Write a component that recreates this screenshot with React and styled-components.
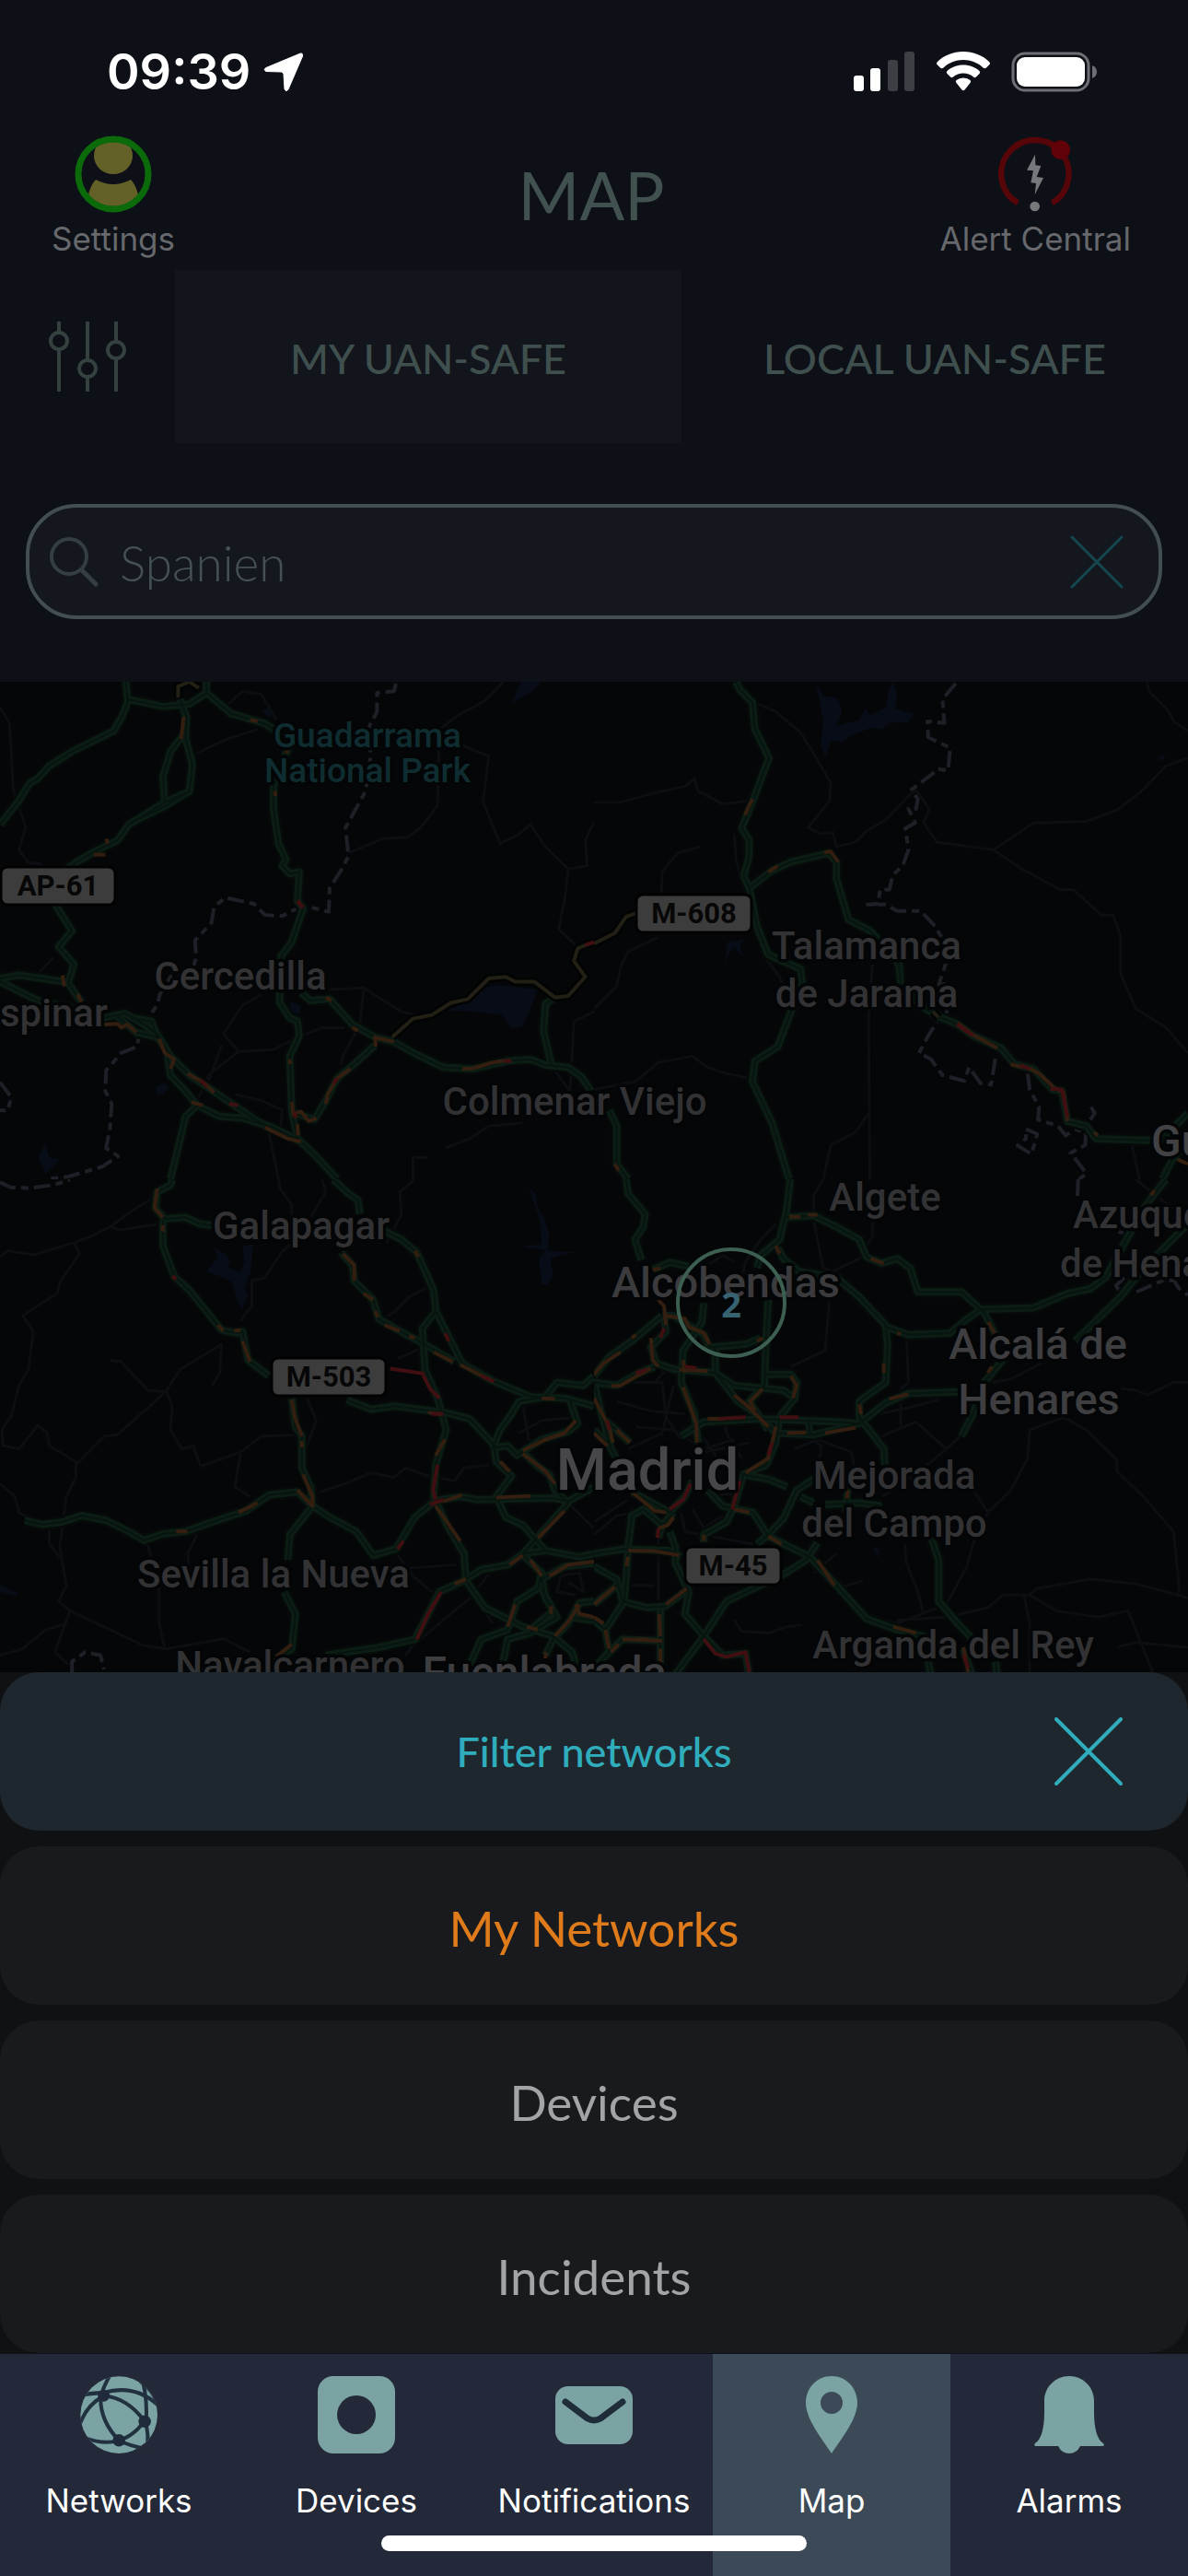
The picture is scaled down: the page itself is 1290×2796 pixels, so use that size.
import React from 'react'
import styled, { createGlobalStyle } from 'styled-components'

const GlobalStyle = createGlobalStyle`
  * { box-sizing: border-box; }
  body {
    margin: 0;
    background: #0d1017;
    font-family: Inter, "Liberation Sans", sans-serif;
  }
  button, input { font: inherit; color: inherit; }
`

/* ---------- map data ---------- */
/* every quarter of the map has its own 1568 x 1568 grid */

const northWest = {
  x: 0,
  y: 0,
  water: [
    'M1180 1035L1235 1010L1270 965L1320 955L1420 970L1400 1030L1380 1085L1350 1095L1325 1050L1250 1040Z',
    'M410 1280L430 1262L447 1280L430 1302L412 1298Z',
    'M120 1455L130 1500L160 1505L120 1552L100 1500Z',
    'M690 95L705 82L725 100L710 112Z',
    'M1350 68L1375 0L1430 0L1400 35Z',
    'M765 1010L795 1020L790 1050L765 1040Z',
  ],
  minor: [
    'M0 80L25 130L35 340L68 460L50 530L75 570L110 575',
    'M1330 0L1280 60L1210 105L1160 150L1155 390L1110 460L1075 490L1010 495L920 540',
    'M1160 190L1220 200L1290 235L1275 380L1320 510L1370 480L1400 450L1440 520L1500 590L1550 580L1545 500L1568 440',
    'M1500 590L1490 690L1475 780L1520 830',
    'M520 225L600 180L680 150', 'M730 120L690 40L640 30L590 85',
    'M690 985L640 1020L590 1110L630 1165L720 1160L790 1120L850 1090L910 1090',
    'M630 1165L550 1240L525 1310', 'M585 1145L550 1260',
    'M870 970L960 965L1060 1040L1110 1055', 'M960 970L950 1080L905 1180L900 1210',
    'M1568 1040L1515 1070L1505 1290L1460 1220', 'M620 1300L690 1320L745 1350L740 1400L710 1420L735 1568',
    'M1175 1470L1240 1440L1290 1400L1380 1390', 'M1090 1568L1090 1500L1130 1500', 'M140 870L105 915',
  ],
  borders: [
    'M1045 5L1040 30L995 35L995 95L975 140L978 240L965 345L912 460L920 550L900 595L870 650L868 725L800 705L745 738L700 735L670 700L595 680L565 710L558 760L515 815L518 870L505 920L450 930L422 985L415 1020L370 1090L362 1150L320 1170L280 1225L278 1290L295 1330L290 1410L280 1470L312 1495L270 1528L180 1560L120 1568',
    'M0 1262L30 1310L20 1352L0 1350',
  ],
  yellow: ['M1035 1120L1090 1062L1140 1050L1190 1012L1235 1000L1290 935L1335 930L1360 945L1410 945L1465 995L1500 990L1545 930L1515 880L1525 840L1568 820', 'M470 50L470 15L500 0L525 20'],
  roads: [
    'M332 0L337 55L430 78L500 70L545 35L545 0', 'M340 55L322 110L300 155L190 220L130 265L100 305L78 320L50 375L0 450',
    'M545 35L610 100L700 132L770 190L755 225L722 330L722 400L735 510L755 560L745 580L765 605L790 600L785 690L800 715L770 820L742 865L738 1010L765 1060L785 1070L790 1115L765 1180L770 1350L785 1440',
    'M475 55L492 110L490 180L508 260L500 345L435 380L340 450L310 500L250 535L200 570L165 600L150 710L190 785L155 835L195 890L180 950L215 1010',
    'M485 165L450 220L430 300L435 380', 'M500 345L430 395L345 445',
    'M0 935L50 925L170 945', 'M0 945L100 1005L220 1040', 'M270 1060L330 1045L380 1080L415 1110L450 1180L500 1240L600 1320L680 1385L790 1445L830 1490L890 1568',
    'M310 1055L360 1105L415 1120L440 1160L450 1240L490 1290L520 1335L580 1370L640 1375L720 1405L795 1450', 'M350 1060L400 1070L415 1120',
    'M520 1335L490 1370L470 1470L450 1568',
    'M795 980L820 1005L870 1000L930 1080L990 1120L1040 1135L1100 1175L1170 1215L1250 1220L1340 1195L1400 1190L1440 1208L1500 1215L1535 1245L1560 1290',
    'M990 1145L940 1200L890 1250L860 1320L830 1380L780 1360', 'M1465 995L1440 1015L1435 1100L1455 1205',
  ],
  slow: [
    'M485 110L478 180', 'M248 545L278 545', 'M165 925L170 960', 'M205 985L215 1010', 'M275 1080L310 1078L320 1090L335 1080L360 1105',
    'M420 1125L435 1170L460 1190L450 1220', 'M495 1235L540 1265L565 1295', 'M505 1325L535 1335', 'M700 1405L760 1440L795 1450',
    'M930 1090L945 1100', 'M985 1120L1040 1135', 'M990 1125L992 1150', 'M925 1220L890 1250L865 1300L860 1330', 'M835 1375L815 1385L795 1355L775 1360', 'M785 1395L787 1430',
    'M1220 1220L1250 1218L1300 1200L1330 1195', 'M860 995L875 1005', 'M765 1190L765 1205', 'M660 120L680 125', 'M770 1325L775 1370', 'M280 495L285 510', 'M755 210L758 225', 'M725 345L728 360',
  ],
  jam: ['M785 690L800 712', 'M530 1255L545 1275', 'M605 1330L628 1335', 'M1330 1195L1350 1195', 'M880 1265L890 1250', 'M778 1355L780 1375', 'M1545 830L1568 820'],
}

const northEast = {
  x: 645,
  y: 0,
  water: [
    'M585 0L605 45L640 50L655 90L640 140L700 120L715 85L730 105L770 80L780 20L790 0L800 40L795 85L845 100L830 128L780 130L760 150L730 145L680 170L655 190L625 185L612 240L598 200L605 120Z',
    'M345 888L352 820L400 810L385 830L395 862L378 850L372 835L360 850Z', 'M1485 245L1500 230L1512 238L1495 248Z',
  ],
  minor: [
    'M425 65L480 95L545 160L585 235L625 320L622 375L565 460L600 480L630 475L640 520L690 505L720 470L770 435L830 360L850 340L885 400L870 445L905 505L1055 530L1160 445L1300 440L1380 405L1450 340L1510 265L1568 240',
    'M1460 0L1465 30L1515 90L1530 125L1568 155', 'M1055 530L1130 590L1230 655L1265 655L1340 735L1370 735L1390 800L1390 920L1430 1030L1510 1090L1568 1170',
    'M0 380L70 380L160 350L240 330L265 305L275 345L340 385L410 375', 'M280 520L220 540L180 600L178 665', 'M170 805L90 850L70 900L60 960L0 1030',
    'M370 480L375 560L395 640', 'M735 890L725 1060L728 1568', 'M0 1285L110 1260L170 1200L260 1180L300 1215L350 1235L410 1250', 'M725 1360L690 1420L625 1460L605 1568',
    'M440 850L490 930L500 960', 'M1420 1460L1440 1568',
  ],
  borders: [
    'M955 5L920 55L925 130L880 125L882 175L940 208L935 280L910 275L838 340L855 370L850 400L830 400L848 445L822 462L830 530L815 580L788 610L780 655L755 655L750 700L722 702L770 702L800 722L862 722L900 770L925 820L928 890L910 955L940 950L930 1045L910 1065L885 1110L858 1170L890 1190L920 1240L978 1258L990 1215L1020 1265L1048 1270L1062 1170',
    'M1145 1235L1150 1285L1175 1340L1172 1380L1225 1400L1245 1430L1270 1410L1298 1420L1297 1460L1258 1485L1300 1550L1280 1568',
    'M1140 1410L1170 1425L1155 1488L1118 1462L1140 1440Z', 'M1310 1380L1322 1360L1312 1340',
  ],
  yellow: ['M0 825L55 792L85 740L115 728', 'M895 1040L910 1058'],
  roads: [
    'M375 0L385 25L418 65L425 150L462 240L440 310L418 380L390 460L410 500L408 560L395 610L410 650L430 770L460 860L545 905L550 950L520 1040L485 1150L425 1195L418 1260L470 1390L515 1568',
    'M410 650L470 595L520 568L620 540L640 570L640 620L672 750L730 785L805 890L810 955L860 1020L910 1055L960 1080L1000 1115L1075 1155L1110 1205L1160 1220L1210 1285L1235 1290L1250 1385L1300 1400L1325 1440L1460 1445L1500 1440L1568 1360',
    'M40 1350L60 1400L60 1520L90 1568', 'M1568 1440L1525 1510L1500 1568',
  ],
  slow: [
    'M418 370L398 420', 'M460 600L485 580', 'M608 538L625 535L645 568', 'M55 1520L65 1540', 'M960 1075L1000 1112L1065 1155', 'M1100 1205L1130 1215', 'M1145 1215L1175 1235L1215 1280L1240 1295L1250 1385', 'M1320 1420L1330 1430', 'M1540 1505L1568 1520',
  ],
  jam: ['M958 1080L1000 1115', 'M1125 1208L1150 1220', 'M1205 1283L1235 1285L1250 1370'],
}

const southWest = {
  x: 0,
  y: 540,
  water: [
    'M545 290L575 245L565 215L595 235L610 260L600 275L635 295L645 260L640 210L668 205L662 290L645 345L655 365L638 412L622 365L610 320Z',
    'M1395 20L1415 50L1420 90L1440 130L1450 180L1445 225L1515 230L1452 250L1460 300L1445 335L1430 330L1422 250L1440 225L1375 212L1430 205L1425 130Z',
    'M0 1278L48 1305L45 1315L0 1300Z',
  ],
  minor: [
    'M0 245L20 225L90 238L195 200L240 180L290 150L360 90L410 55', 'M290 150L315 160L425 140', 'M195 200L210 235L160 320L150 360L60 430L88 480L75 600L50 650L30 745L5 790L8 840L50 850L100 775L125 800L130 840L200 890L200 940L175 1000L158 1160L175 1280L155 1330L185 1360L145 1490L180 1530',
    'M200 900L275 810L310 805L410 700L440 665L475 600L585 520L580 610L560 650', 'M290 570L320 575L390 665L440 670L455 720L450 790L480 850L510 840L530 905L635 860L690 810L790 805', 'M635 865L620 970L660 1000',
    'M635 445L665 400L665 320L700 310L740 235L770 200L770 80L740 30L735 0', 'M850 0L860 40L820 120', 'M1095 0L1055 40L1060 110L1020 200', 'M1130 340L1080 370L1040 420L1010 440', 'M1125 525L1050 565', 'M810 690L835 760L810 840',
    'M845 985L920 955L980 925L1040 940L1070 910L1130 935L1200 950L1225 910L1290 900', 'M0 960L40 1000L50 1050L80 1070', 'M130 1080L130 1150L165 1200', 'M185 1360L380 1470L440 1480L590 1448L660 1490', 'M0 1500L60 1480L120 1420L175 1400',
    'M390 1150L420 1300L420 1400L435 1480', 'M520 1120L495 1180L500 1230', 'M1050 1185L1090 1250L1140 1300', 'M1080 1225L1205 1215', 'M1300 1230L1240 1320L1130 1430L1090 1470L1070 1500', 'M1500 1020L1568 1100', 'M1280 1360L1300 1400', 'M1370 800L1430 760L1520 750', 'M1380 710L1400 850', 'M1500 1270L1540 1300L1530 1240L1480 1250L1470 1300L1520 1310',
  ],
  borders: ['M0 10L30 26L80 28L140 18L185 2', 'M190 1560L190 1520L225 1490L265 1500L275 1545'],
  yellow: [],
  roads: [
    'M455 0L450 18L415 40L410 90L435 125L490 120L525 140L560 145', 'M430 130L430 210L460 305L500 350L585 475L625 485L640 480L655 570L710 620',
    'M880 0L920 45L945 65L950 110', 'M1010 160L1060 190L1100 230L1145 350L1150 415L1220 580L1300 635L1400 685L1490 690L1568 715',
    'M900 230L930 270L935 320L985 380L1000 440L1050 475L1120 520L1200 575', 'M1148 420L1115 470L1122 600L1155 690L1178 790L1150 900L1145 1000L1180 1090L1225 1180L1230 1265',
    'M770 690L780 780L797 810L797 910L820 970L825 1030L765 1120L760 1200', 'M750 1300L780 1370L770 1480L730 1510',
    'M65 1075L110 1088L165 1080L215 1060L280 1075L340 1110L380 1138L430 1118L490 1110L560 1080L650 1045L710 995L785 985L825 1030L870 1065L940 1110L985 1185L1045 1165L1095 1065L1150 1012L1215 1000L1260 1010L1460 1005L1500 1015L1568 970',
    'M915 695L980 725L1040 715L1175 735L1240 755L1310 845L1340 840L1365 870L1430 820L1500 795L1525 770L1505 700',
    'M1300 850L1320 790L1350 740L1370 700L1440 685L1470 640L1540 650L1568 620', 'M1305 850L1310 890L1350 935L1310 1000L1335 1065L1380 1090L1440 1170L1530 1190L1568 1180', 'M1380 860L1420 905L1450 930L1465 980L1500 1020L1440 1100L1380 1180L1340 1215L1270 1230L1225 1265L1160 1300L1130 1370L1095 1450L1000 1475L860 1500',
    'M1230 1265L1280 1350L1380 1410L1460 1440L1510 1490L1530 1568', 'M1380 1185L1430 1240L1420 1290L1365 1330L1340 1420L1270 1450L1240 1530', 'M1380 1180L1440 1170', 'M1568 1210L1490 1220L1430 1260L1440 1320L1470 1380L1400 1430L1340 1450L1325 1540', 'M1430 1290L1460 1360L1400 1420', 'M1568 1330L1530 1335L1500 1400L1460 1450L1440 1500', 'M1500 1380L1568 1390',
  ],
  slow: [
    'M415 30L408 90L430 120', 'M430 145L430 165', 'M575 460L590 478', 'M618 478L635 475', 'M640 510L660 575', 'M770 695L778 750L797 810', 'M797 825L797 845', 'M800 930L825 1000L825 1035', 'M785 980L825 1030', 'M630 1050L680 1020', 'M465 1110L495 1110',
    'M905 235L935 270L935 320', 'M960 360L985 380', 'M990 415L998 435', 'M1015 460L1055 478', 'M1080 495L1095 500', 'M1145 545L1195 575', 'M1215 585L1300 635', 'M1130 735L1165 740', 'M1150 870L1175 820', 'M1430 690L1465 692', 'M1520 760L1490 800L1440 820L1380 855', 'M1380 865L1440 920L1465 960', 'M1170 1015L1220 995', 'M1310 1003L1400 998', 'M1320 890L1345 920',
    'M1150 1030L1215 1140', 'M1490 1045L1420 1130', 'M1380 1185L1345 1215', 'M1400 1200L1430 1250', 'M1230 1260L1200 1275', 'M1568 1205L1500 1215L1450 1250', 'M1360 1340L1340 1410', 'M1440 1490L1440 1510', 'M1530 1340L1500 1395L1465 1440', 'M1568 1380L1530 1370L1520 1340', 'M770 1465L730 1505', 'M1390 1410L1420 1420', 'M1455 1345L1455 1370', 'M1095 225L1105 245',
  ],
  jam: ['M455 305L465 315', 'M1030 597L1115 612L1135 660L1160 690', 'M1175 485L1185 510', 'M1270 620L1305 638', 'M1155 900L1143 980L1150 1010', 'M1135 1025L1170 1010', 'M1165 1300L1130 1370L1100 1450', 'M1050 1165L1065 1140', 'M1140 740L1170 740'],
}

const southEast = {
  x: 645,
  y: 540,
  water: ['M735 1160L755 1165L748 1195Z'],
  minor: [
    'M605 0L580 50L580 130L605 280L630 290L700 250L735 180L735 120', 'M610 290L620 400L610 540L520 590', 'M480 140L440 190L400 260L390 310', 'M825 490L830 640L810 660L810 780', 'M1430 0L1568 130', 'M750 740L830 720L910 695', 'M1050 640L1100 630L1180 580', 'M1390 660L1430 665L1460 680L1530 640L1568 640',
    'M760 810L850 765L930 850L860 920L800 970L760 1000', 'M930 850L975 800', 'M990 960L1040 1050L1100 980L1145 880L1150 790L1240 750L1300 790L1380 885L1380 920L1450 1000L1530 1110L1545 1290L1540 1315', 'M1040 1050L1000 1150L985 1220L930 1340L800 1400L720 1370', 'M800 1390L930 1380L1040 1350L1080 1310L1150 1310L1170 1290L1310 1260L1430 1275L1540 1310L1568 1320',
    'M1135 1310L1150 1400L1150 1568', 'M1150 1310L1220 1360L1330 1380L1410 1360L1440 1450L1480 1568', 'M1380 1475L1430 1460L1568 1475', 'M820 1150L825 1210L855 1300L870 1370', 'M530 850L590 820L680 860L690 920', 'M590 930L600 840L550 800', 'M640 1180L580 1240', 'M710 1265L640 1290', 'M370 1390L390 1425L460 1430L510 1410L550 1405',
    'M100 640L180 640L190 750L230 820', 'M110 780L210 790L290 850L370 820', 'M160 640L190 600', 'M60 700L150 730L240 740', 'M90 850L180 800L210 650', 'M280 800L320 870L330 960', 'M290 860L410 830', 'M340 740L350 800L390 880', 'M0 1120L60 1060L110 1050', 'M170 1100L170 1400', 'M90 1280L160 1280', 'M260 1040L290 1100L340 1060', 'M230 1050L240 1110L420 1150', 'M300 270L340 240L370 260', 'M310 1000L360 990L370 1030', 'M0 1080L90 1010',
  ],
  borders: ['M1278 0L1276 60', 'M1385 165L1420 180L1420 195', 'M1400 310L1378 335L1385 350', 'M1432 355L1500 320L1530 318L1545 345L1568 365'],
  yellow: [],
  roads: [
    'M85 0L90 45L135 110L130 150L108 190L125 255', 'M155 285L200 262L250 275', 'M518 0L508 100L490 190L440 240L430 280', 'M508 120L580 115L640 150L700 190L720 245L760 265L800 250L835 280L855 355L970 355L1030 420L1060 490', 'M485 215L500 250L540 290L640 310L700 370L770 460L775 520L770 640L700 700L700 750L765 850L768 900',
    'M770 465L830 490L940 485L985 440L1020 410L1160 405L1250 360L1310 345L1350 310L1410 180L1420 160', 'M1510 0L1470 60L1430 130', 'M1568 140L1510 210L1430 310L1390 370L1270 510', 'M1085 560L1030 640L1000 740L970 810', 'M960 670L830 675L770 705L700 770L580 805L480 800',
    'M180 430L100 510L40 560L0 620', 'M180 430L210 430L290 490L305 530L400 520L440 500', 'M290 390L285 450L235 540L230 640L265 740L275 830', 'M460 380L455 480L450 650L410 700L460 790', 'M185 440L190 480L150 530L165 580L215 600L320 610L370 650L500 665L530 690L490 750L480 830L455 900L395 930L370 1030L350 1080L290 1120L290 1145',
    'M320 530L320 610L380 700L440 750L480 800', 'M450 615L520 615L535 640L530 690', 'M0 640L60 650L120 610L160 590', 'M0 640L20 740L45 850L60 880', 'M230 810L290 765L440 755L650 765L700 770', 'M0 790L45 840', 'M30 760L95 830', 'M390 930L460 945L510 970', 'M580 945L535 980L500 1070L460 1120L430 1150', 'M610 1025L700 1020L760 1030', 'M545 1000L580 1020', 'M670 970L665 1050',
    'M100 985L200 1050L240 1000L260 950', 'M300 980L340 1030L420 1050L460 1125L570 1190L640 1280L720 1385L800 1420L900 1450', 'M590 1145L560 1200L500 1245L420 1290L350 1330L290 1440L210 1568', 'M0 1180L80 1165L200 1170L230 1190', 'M90 1160L100 1060L130 1040L180 1090L170 1130', 'M200 1110L215 1160L215 1210L250 1300L240 1370L290 1440L340 1500L400 1495L410 1568', 'M0 1220L60 1260L75 1330L140 1350L190 1345L250 1290', 'M90 1165L80 1330L30 1420L40 1490L0 1540', 'M0 1340L60 1280', 'M175 1355L175 1568', 'M40 1490L75 1450L180 1455', 'M890 1130L910 1200L910 1330L960 1400L1000 1450', 'M180 1090L210 1050', 'M880 1500L890 1568', 'M1060 1520L1065 1568', 'M975 1480L1000 1568', 'M565 755L570 800', 'M0 1390L30 1420',
  ],
  slow: [
    'M515 118L545 118', 'M565 112L590 112', 'M1470 50L1480 35', 'M480 210L490 235', 'M730 250L765 265', 'M155 285L175 280', 'M170 380L185 400L190 460', 'M190 430L240 440L250 465L290 485L305 520', 'M150 500L155 570L170 590', 'M100 500L110 490', 'M70 545L25 580L0 615', 'M45 652L70 650L150 595', 'M225 600L300 605', 'M235 655L270 770L272 830', 'M370 680L410 720L460 780', 'M445 660L412 700L425 730', 'M520 620L535 650L525 690', 'M480 780L460 880L400 925', 'M300 755L340 755', 'M510 800L560 798', 'M610 800L690 783', 'M700 710L705 740', 'M780 692L830 677', 'M765 580L765 610', 'M800 485L810 488', 'M1040 450L1058 485', 'M1050 590L1040 610', 'M430 510L445 500',
    'M0 690L40 780L50 830', 'M60 790L95 830', 'M0 800L35 840', 'M100 985L140 1025L160 1045L190 1050', 'M370 1040L410 1050', 'M460 1125L495 1150', 'M590 1200L635 1280', 'M790 1410L850 1430', 'M90 1170L160 1172L225 1185', 'M90 1190L85 1220', 'M210 1065L195 1090L170 1100', 'M245 1290L190 1340', 'M55 1285L30 1310L0 1340', 'M0 1380L25 1400', 'M30 1420L40 1480', 'M75 1450L180 1455', 'M172 1370L175 1440', 'M110 1450L140 1450', 'M175 1480L175 1540', 'M45 1490L65 1465', 'M670 980L668 1005', 'M290 1120L290 1140', 'M975 1475L990 1568', 'M240 610L235 570',
  ],
  jam: ['M185 470L175 500', 'M110 610L140 600', 'M240 590L270 595', 'M330 755L400 750', 'M490 750L540 750', 'M35 760L40 790', 'M470 830L460 870', 'M385 950L365 1040', 'M255 960L235 1010L200 1040', 'M170 1100L168 1130', 'M290 1450L320 1495L350 1505L400 1490L412 1568', 'M975 1500L988 1540'],
}

const tiles = [northWest, northEast, southWest, southEast]

/* widest strokes first, so that crossings stay clean */
const layers = [
  { key: 'water', fill: '#070c16' },
  { key: 'minor', stroke: '#0d0e12', width: 3 },
  { key: 'borders', stroke: '#1f1f27', width: 4, dash: '18 6 8 6' },
  { key: 'roads', stroke: '#060b0a', width: 13 },
  { key: 'roads', stroke: '#0b1d14', width: 8 },
  { key: 'roads', stroke: '#08140f', width: 2 },
  { key: 'yellow', stroke: '#020303', width: 9 },
  { key: 'yellow', stroke: '#221f15', width: 4 },
  { key: 'slow', stroke: '#331e10', width: 4 },
  { key: 'jam', stroke: '#410f11', width: 4 },
]

const places = [
  { text: 'Guadarrama', x: 399, y: 71, size: 37, color: '#0f2d30' },
  { text: 'National Park', x: 399, y: 109, size: 37, color: '#0f2d30' },
  { text: 'Cercedilla', x: 261, y: 334, size: 42 },
  { text: 'spinar', x: 0, y: 374, size: 42, anchor: 'start' },
  { text: 'Colmenar Viejo', x: 624, y: 470, size: 42 },
  { text: 'Talamanca', x: 941, y: 301, size: 42 },
  { text: 'de Jarama', x: 941, y: 353, size: 42 },
  { text: 'Guadalajara', x: 1250, y: 515, size: 48, color: '#414143', anchor: 'start' },
  { text: 'Galapagar', x: 327, y: 605, size: 42 },
  { text: 'Algete', x: 961, y: 574, size: 42 },
  { text: 'Azuqueca', x: 1165, y: 593, size: 42, anchor: 'start' },
  { text: 'de Henares', x: 1151, y: 646, size: 42, anchor: 'start' },
  { text: 'Alcobendas', x: 788, y: 668, size: 47, color: '#3b3b3d' },
  { text: 'Alcalá de', x: 1127, y: 735, size: 47, color: '#3e3e40' },
  { text: 'Henares', x: 1128, y: 795, size: 47, color: '#3e3e40' },
  { text: 'Madrid', x: 703, y: 877, size: 63, color: '#474749' },
  { text: 'Mejorada', x: 971, y: 876, size: 42 },
  { text: 'del Campo', x: 971, y: 928, size: 42 },
  { text: 'Sevilla la Nueva', x: 297, y: 983, size: 42 },
  { text: 'Arganda del Rey', x: 1035, y: 1060, size: 42 },
  { text: 'Navalcarnero', x: 315, y: 1082, size: 42 },
  { text: 'Fuenlabrada', x: 591, y: 1092, size: 48, color: '#3e3e40' },
]

const shields = [
  { text: 'AP-61', x: 1, y: 201, w: 124 },
  { text: 'M-608', x: 691, y: 231, w: 125 },
  { text: 'M-503', x: 295, y: 734, w: 124 },
  { text: 'M-45', x: 744, y: 939, w: 104 },
]

/* ---------- styled parts ---------- */

const Screen = styled.div`
  min-height: 100vh;
  display: flex;
  flex-direction: column;
  background: #0d1017;
`

const StatusBar = styled.div`
  height: 147px;
  padding: 8px 98px 0 116px;
  display: flex;
  align-items: center;
  justify-content: space-between;
  color: #fff;
`

const StatusGroup = styled.div`
  display: flex;
  align-items: center;
  gap: ${props => props.$gap}px;
`

const Clock = styled.time`
  font-size: 54px;
  font-weight: 600;
  line-height: 64px;
`

const Header = styled.header`
  display: grid;
  grid-template-columns: 1fr auto 1fr;
  align-items: center;
  padding: 0 62px 14px 56px;
`

const HeaderButton = styled.button`
  justify-self: ${props => props.$side};
  display: flex;
  flex-direction: column;
  align-items: center;
  gap: 8px;
  padding: 0;
  border: 0;
  background: none;
  color: #66686c;
  font-size: 35px;
  line-height: 40px;
`

const Title = styled.h1`
  margin: 0;
  padding-bottom: 4px;
  color: #41514f;
  font-family: Lato, sans-serif;
  font-size: 72px;
  font-weight: 400;
  line-height: 80px;
`

const Tabs = styled.div`
  display: flex;
  height: 188px;
`

const FilterButton = styled.button`
  width: 190px;
  display: flex;
  align-items: center;
  justify-content: center;
  padding: 0;
  border: 0;
  background: none;
`

const Tab = styled.button`
  flex: 1;
  padding: 4px 0 0;
  border: 0;
  background: ${props => (props.$active ? '#12151c' : 'none')};
  color: #3f4f4d;
  font-family: Lato, sans-serif;
  font-size: 45px;
  font-weight: 500;
`

const SearchBox = styled.label`
  display: flex;
  align-items: center;
  height: 125px;
  margin: 66px 28px 68px;
  padding: 0 38px 0 22px;
  border: 4px solid #434e53;
  border-radius: 55px;
  background: #14171e;
`

const SearchInput = styled.input`
  flex: 1;
  min-width: 0;
  margin-left: 22px;
  padding: 2px 0 0;
  border: 0;
  outline: 0;
  background: none;
  color: #465154;
  font-family: Lato, sans-serif;
  font-size: 53px;
  font-weight: 300;
`

const IconButton = styled.button`
  display: flex;
  padding: 0;
  border: 0;
  background: none;
  color: ${props => props.$color};
`

const MapArea = styled.main`
  position: relative;
  flex: 1;
  min-height: 400px;
  overflow: hidden;
  background: #050608;
`

const MapCanvas = styled.svg`
  position: absolute;
  inset: 0;
  width: 100%;
  height: 100%;
`

const Sheet = styled.section`
  display: flex;
  flex-direction: column;
  gap: 17px;
  padding-bottom: 1px;
  background: #101113;
`

const SheetHeader = styled.div`
  display: grid;
  grid-template-columns: 1fr auto 1fr;
  align-items: center;
  height: 172px;
  padding: 0 71px;
  border-radius: 42px;
  background: #1e272e;
`

const SheetTitle = styled.h2`
  grid-column: 2;
  margin: 0;
  color: #30adbc;
  font-family: Lato, sans-serif;
  font-size: 45px;
  font-weight: 500;
`

const CloseCell = styled.div`
  justify-self: end;
`

const SheetOption = styled.button`
  height: 172px;
  padding: 4px 0 0;
  border: 0;
  border-radius: 42px;
  background: #191a1d;
  color: ${props => (props.$active ? '#df7b1a' : '#a3a4a6')};
  font-family: Lato, sans-serif;
  font-size: 53px;
`

const TabBar = styled.nav`
  position: relative;
  display: flex;
  height: 241px;
  background: #232938;
`

const TabLink = styled.a`
  flex: 1 1 0;
  min-width: 0;
  display: flex;
  flex-direction: column;
  align-items: center;
  gap: 31px;
  padding-top: 24px;
  background: ${props => (props.$active ? '#3b4a56' : 'none')};
  color: #fff;
  font-size: 35px;
  line-height: 40px;
  text-decoration: none;
`

const HomeIndicator = styled.div`
  position: absolute;
  left: 50%;
  bottom: 27px;
  width: 462px;
  height: 17px;
  margin-left: -231px;
  border-radius: 9px;
  background: #fff;
`

/* ---------- icons ---------- */

const LocationArrow = () => (
  <svg width="44" height="44" viewBox="0 0 44 44">
    <path d="M39 2.500Q43 .500 42.500 5L27 41Q24.500 44.500 23 40.500L22 24.500Q21.500 22.500 19.500 22L3 21.500Q-.500 19.500 3 17.500Z" fill="#fff" stroke="#fff" strokeWidth="1" />
  </svg>
)

const Signal = () => (
  <svg width="67" height="43" viewBox="0 0 67 43" fill="#fff">
    <rect x="0" y="26" width="11" height="17" rx="3" />
    <rect x="18" y="18" width="11" height="25" rx="3" />
    <rect x="37" y="9" width="11" height="34" rx="3" fill="#3d3f45" />
    <rect x="55" y="0" width="11" height="43" rx="3" fill="#3d3f45" />
  </svg>
)

const Wifi = () => (
  <svg width="58" height="43" viewBox="0 0 58 43" fill="#fff">
    <path d="M29 0C18 0 8 4 1 11Q-1 13 1 14.500L4 17.500Q5.500 19 7.500 17.500C13 12 21 9 29 9S45 12 50.500 17.500Q52.500 19 54 17.500L57 14.500Q59 13 57 11C50 4 40 0 29 0Z" />
    <path d="M29 14.500C22 14.500 16 17 11.500 21Q10 22.500 11.500 24L15 27.500Q16.500 29 18 27.500C21 25 25 23.500 29 23.500S37 25 40 27.500Q41.500 29 43 27.500L46.500 24Q48 22.500 46.500 21C42 17 36 14.500 29 14.500Z" />
    <path d="M29 28.500Q24.500 28.500 21.500 31Q20 32.500 21.500 34L27.500 41.500Q29 43 30.500 41.500L36.500 34Q38 32.500 36.500 31Q33.500 28.500 29 28.500Z" />
  </svg>
)

const Battery = () => (
  <svg width="94" height="44" viewBox="0 0 94 44">
    <rect x="2" y="2" width="82" height="40" rx="13" fill="none" stroke="#6d6f74" strokeWidth="3" />
    <rect x="6" y="6" width="74" height="32" rx="9" fill="#fff" />
    <path d="M88 15Q93 17 93 22T88 29Z" fill="#6d6f74" />
  </svg>
)

const Avatar = () => (
  <svg width="84" height="84" viewBox="0 0 84 84">
    <clipPath id="face"><circle cx="42" cy="42" r="35" /></clipPath>
    <g clipPath="url(#face)" fill="#636128">
      <ellipse cx="42" cy="22" rx="21" ry="20" />
      <path d="M23 48Q42 58 61 48Q70 57 72 84H12Q14 57 23 48Z" />
    </g>
    <circle cx="42" cy="42" r="38" fill="none" stroke="#0b6b0a" strokeWidth="7" />
  </svg>
)

const AlertIcon = () => (
  <svg width="84" height="84" viewBox="56 50 252 252">
    <path d="M126 270A110 110 0 1 1 237 270" fill="none" stroke="#560609" strokeWidth="19" />
    <circle cx="265" cy="97" r="31" fill="#600207" />
    <path d="M182 112L155 163L176 165L168 204L185 206L181 243L209 188L187 185L201 149L183 147Z" fill="#77787b" />
    <circle cx="181" cy="281" r="16" fill="#77787b" />
  </svg>
)

const Sliders = () => (
  <svg width="84" height="76" viewBox="0 0 84 76" fill="none" stroke="#35413f" strokeWidth="4">
    <path d="M11 0V11M11 31V76M42 0V41M42 61V76M73 0V21M73 41V76" />
    <circle cx="11" cy="21" r="9" />
    <circle cx="42" cy="51" r="9" />
    <circle cx="73" cy="31" r="9" />
  </svg>
)

const Magnifier = () => (
  <svg width="54" height="54" viewBox="0 0 54 54" fill="none" stroke="#353f42" strokeWidth="4" strokeLinecap="round">
    <circle cx="21" cy="21" r="19" />
    <path d="M35 36L50 51" strokeWidth="5" />
  </svg>
)

const Cross = ({ size, weight }) => (
  <svg width={size} height={size} viewBox={`0 0 ${size} ${size}`} stroke="currentColor" strokeWidth={weight} strokeLinecap="round">
    <path d={`M2 2L${size - 2} ${size - 2}M${size - 2} 2L2 ${size - 2}`} />
  </svg>
)

const NetworksIcon = () => (
  <svg width="84" height="84" viewBox="54 56 249 249">
    <clipPath id="globe"><circle cx="179" cy="181" r="124" /></clipPath>
    <circle cx="179" cy="181" r="124" fill="#7ba3a4" />
    <g clipPath="url(#globe)" fill="none" stroke="#223140" strokeWidth="12">
      <path d="M40 120Q80 112 130 109Q235 80 310 155" />
      <path d="M155 45Q128 90 120 125Q118 200 179 263" />
      <path d="M50 220Q72 150 130 120Q205 125 262 202" />
      <path d="M248 50Q270 110 267 190Q235 245 179 263Q130 278 70 255" />
      <path d="M262 202Q278 240 268 300" />
      <path d="M179 263Q210 280 265 290" />
    </g>
    {/* dark edges where the globe is cut away */}
    <path d="M244 60L300 100L307 140L296 143Q280 105 244 78Z" fill="#232938" opacity=".6" />
    <path d="M268 268L275 300L240 305L225 296Z" fill="#232938" opacity=".7" />
    <g fill="#1f2b3a">
      <circle cx="130" cy="119" r="19" />
      <circle cx="262" cy="202" r="20" />
      <circle cx="179" cy="263" r="20" />
    </g>
  </svg>
)

const DevicesIcon = () => (
  <svg width="84" height="84" viewBox="0 0 84 84">
    <rect width="84" height="84" rx="17" fill="#7ba3a4" />
    <circle cx="42" cy="42" r="21" fill="#232938" />
  </svg>
)

const MailIcon = () => (
  <svg width="84" height="84" viewBox="0 0 84 84">
    <rect y="11" width="84" height="63" rx="14" fill="#7ba3a4" />
    <path d="M11 28L35 46Q42 50 49 46L73 28" fill="none" stroke="#1f2d3b" strokeWidth="7" strokeLinecap="round" />
  </svg>
)

const PinIcon = () => (
  <svg width="84" height="84" viewBox="0 0 84 84">
    <path fillRule="evenodd" d="M42 0C26 0 14 13 14 29C14 46 30 66 42 84C54 66 70 46 70 29C70 13 58 0 42 0ZM42 17A12 12 0 1 1 42 41A12 12 0 1 1 42 17Z" fill="#7ba3a4" />
  </svg>
)

const BellIcon = () => (
  <svg width="84" height="84" viewBox="0 0 84 84">
    <path d="M42 0C27 0 15 12 15 27V40C15 55 12 69 5 73Q3 76 6 76H30Q34 84 42 84T54 76H78Q81 76 79 73C72 69 69 55 69 40V27C69 12 57 0 42 0Z" fill="#7ba3a4" />
  </svg>
)

/* ---------- sections ---------- */

const TrafficMap = () => (
  <MapCanvas viewBox="0 0 1290 1075" preserveAspectRatio="xMidYMin slice">
    {layers.map((layer, i) =>
      tiles.map((tile, j) => (
        <svg key={`${i}-${j}`} x={tile.x} y={tile.y} width="645" height="540" viewBox="0 0 1568 1568" preserveAspectRatio="none">
          {tile[layer.key].map(d => (
            <path
              key={d}
              d={d}
              fill={layer.fill || 'none'}
              stroke={layer.stroke}
              strokeWidth={layer.width}
              strokeDasharray={layer.dash}
              strokeLinejoin="round"
              vectorEffect="non-scaling-stroke"
            />
          ))}
        </svg>
      ))
    )}
    <g fontFamily="Roboto, sans-serif" fontWeight="500" stroke="#040506" strokeWidth="7" strokeLinejoin="round" paintOrder="stroke">
      {places.map(p => (
        <text key={p.text} x={p.x} y={p.y} fontSize={p.size} fill={p.color || '#323234'} textAnchor={p.anchor || 'middle'}>
          {p.text}
        </text>
      ))}
    </g>
    <g fontFamily="Roboto, sans-serif" fontWeight="700" fontSize="31" textAnchor="middle">
      {shields.map(s => (
        <g key={s.text}>
          <rect x={s.x} y={s.y} width={s.w} height="41" rx="7" fill="#3c3c3c" stroke="#020202" strokeWidth="3" />
          <text x={s.x + s.w / 2} y={s.y + 31} fill="#070707">{s.text}</text>
        </g>
      ))}
    </g>
    <circle cx="794" cy="674" r="58" fill="none" stroke="#3c5f51" strokeWidth="4" />
    <text x="794" y="690" textAnchor="middle" fontFamily="Open Sans, sans-serif" fontWeight="700" fontSize="38" fill="#376270">2</text>
  </MapCanvas>
)

const navItems = [
  { label: 'Networks', icon: <NetworksIcon /> },
  { label: 'Devices', icon: <DevicesIcon /> },
  { label: 'Notifications', icon: <MailIcon /> },
  { label: 'Map', icon: <PinIcon />, active: true },
  { label: 'Alarms', icon: <BellIcon /> },
]

export default function App() {
  return (
    <Screen>
      <GlobalStyle />
      <StatusBar>
        <StatusGroup $gap={14}>
          <Clock>09:39</Clock>
          <LocationArrow />
        </StatusGroup>
        <StatusGroup $gap={23}>
          <Signal />
          <Wifi />
          <Battery />
        </StatusGroup>
      </StatusBar>

      <Header>
        <HeaderButton $side="start">
          <Avatar />
          Settings
        </HeaderButton>
        <Title>MAP</Title>
        <HeaderButton $side="end">
          <AlertIcon />
          Alert Central
        </HeaderButton>
      </Header>

      <Tabs>
        <FilterButton aria-label="Filter">
          <Sliders />
        </FilterButton>
        <Tab $active>MY UAN-SAFE</Tab>
        <Tab>LOCAL UAN-SAFE</Tab>
      </Tabs>

      <SearchBox>
        <Magnifier />
        <SearchInput type="text" aria-label="Search" defaultValue="Spanien" />
        <IconButton $color="#15474e" aria-label="Clear search">
          <Cross size={58} weight={3} />
        </IconButton>
      </SearchBox>

      <MapArea>
        <TrafficMap />
      </MapArea>

      <Sheet>
        <SheetHeader>
          <SheetTitle>Filter networks</SheetTitle>
          <CloseCell>
            <IconButton $color="#30adbc" aria-label="Close filter">
              <Cross size={74} weight={4} />
            </IconButton>
          </CloseCell>
        </SheetHeader>
        <SheetOption $active>My Networks</SheetOption>
        <SheetOption>Devices</SheetOption>
        <SheetOption>Incidents</SheetOption>
      </Sheet>

      <TabBar>
        {navItems.map(item => (
          <TabLink key={item.label} href="#" $active={item.active}>
            {item.icon}
            {item.label}
          </TabLink>
        ))}
        <HomeIndicator />
      </TabBar>
    </Screen>
  )
}
